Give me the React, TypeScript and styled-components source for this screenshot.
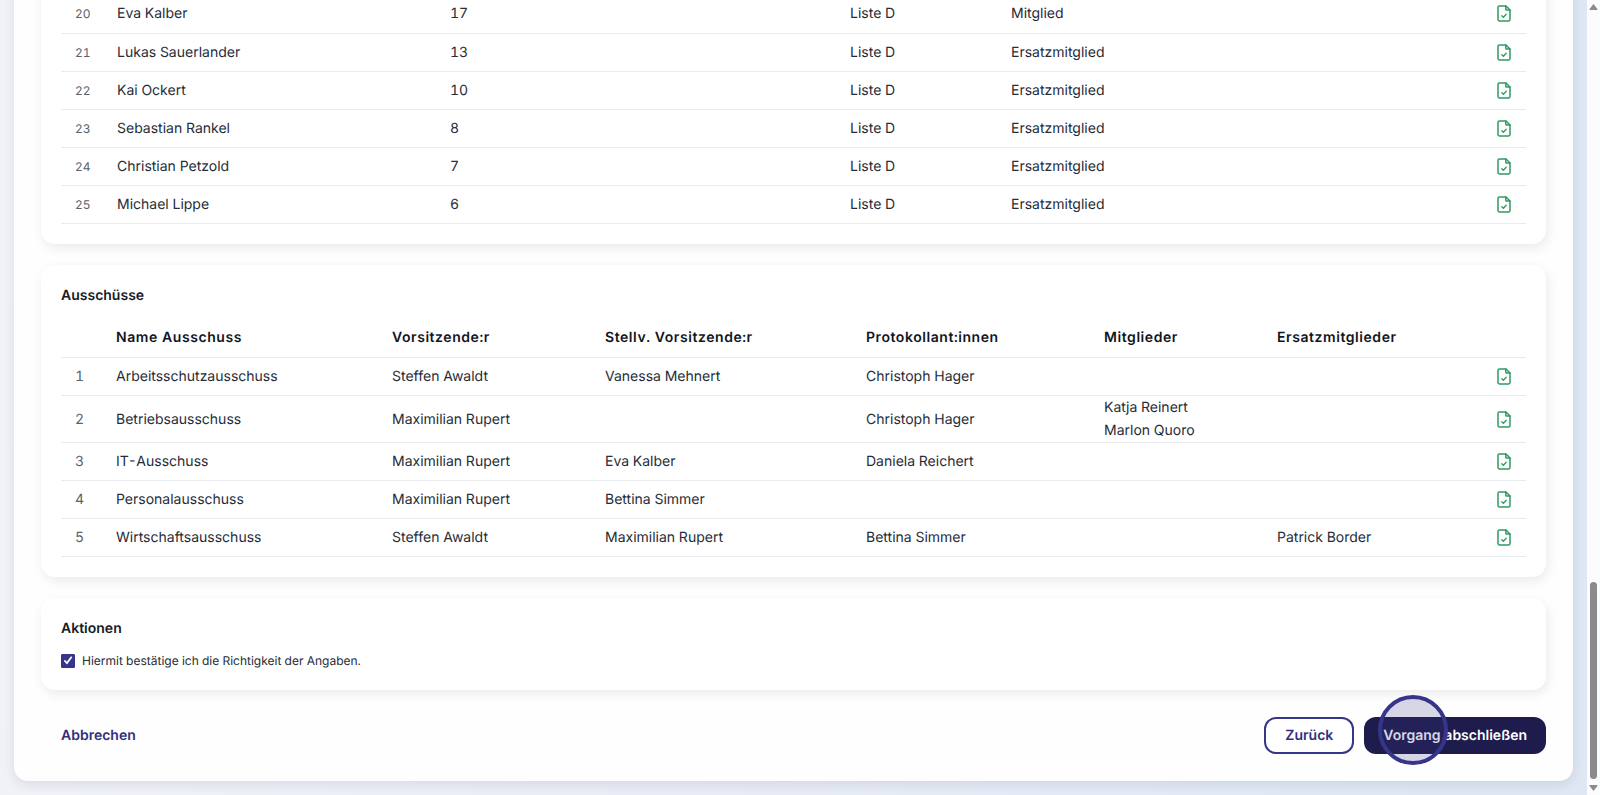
import React from "react";
import styled, { createGlobalStyle } from "styled-components";

const GlobalStyle = createGlobalStyle`
  *, *::before, *::after { box-sizing: border-box; }
  body {
    margin: 0;
    font-family: Inter, "Liberation Sans", sans-serif;
    font-size: 14px;
    line-height: 23px;
    font-variant-numeric: tabular-nums;
    text-rendering: geometricPrecision;
    color: #262c38;
  }
`;

const Window = styled.div`
  display: flex;
  height: 100vh;
  overflow: hidden;
`;

/* The view rests at its lower end, so rows above the fold run out of the top. */
const Viewport = styled.main`
  flex: 1;
  min-width: 0;
  display: flex;
  flex-direction: column;
  justify-content: flex-end;
  overflow: hidden;
  padding: 0 14px 14px;
  background: linear-gradient(100deg, #f1f3f7 0%, #e8ecf6 50%, #dfe7f4 90%);
`;

const Panel = styled.form`
  display: flex;
  flex-direction: column;
  gap: 21px;
  padding: 27px;
  border-radius: 14px;
  background: #fefefe;
  box-shadow: 0 3px 12px rgba(20, 30, 60, 0.1);
`;

const Card = styled.section`
  padding: 20px 20px 20px;
  border-radius: 14px;
  background: #ffffff;
  box-shadow: 2px 4px 12px rgba(0, 0, 0, 0.08);
`;

const Heading = styled.h2`
  margin: 0;
  font-size: 14px;
  font-weight: 600;
  line-height: 22px;
  color: #161b26;
`;

const Table = styled.table`
  width: 100%;
  table-layout: fixed;
  border-collapse: collapse;
`;

const Row = styled.tr`
  height: 38px;
  border-bottom: 1px solid #e9eaed;
`;

const HeadRow = styled(Row)`
  height: 51px;
`;

const HeadCell = styled.th`
  padding: 12px 0 0;
  text-align: left;
  font-weight: 600;
  letter-spacing: 0.04em;
  white-space: nowrap;
  color: #11151e;
`;

const Cell = styled.td`
  padding: 0;
`;

const NumberCell = styled(Cell)<{ $small?: boolean }>`
  padding-left: 14px;
  font-size: ${(p) => (p.$small ? 12 : 14)}px;
  color: #5c626c;
`;

const IconCell = styled(Cell)`
  padding-right: 15px;
`;

const DocIcon = styled.svg`
  display: block;
  margin-left: auto;
  fill: none;
  stroke: #2f9a62;
  stroke-width: 1.5;
  stroke-linecap: round;
  stroke-linejoin: round;
`;

const CheckLabel = styled.label`
  display: flex;
  align-items: center;
  gap: 7px;
  width: max-content;
  margin-top: 11px;
  font-size: 12px;
  line-height: 19px;
`;

const CheckBox = styled.input`
  appearance: none;
  flex: none;
  width: 14px;
  height: 14px;
  margin: 0;
  border: 1px solid #37358a;
  border-radius: 1px;
  background: #ffffff;
  display: grid;
  place-content: center;

  &:checked {
    background: #37358a;
  }

  &:checked::before {
    content: "";
    width: 10px;
    height: 10px;
    background: #ffffff;
    clip-path: polygon(8% 54%, 20% 42%, 38% 62%, 80% 8%, 94% 18%, 40% 90%);
  }
`;

const Footer = styled.footer`
  display: flex;
  align-items: center;
  gap: 10px;
  margin-top: 6px;
`;

const CancelLink = styled.a`
  margin: 0 auto 0 20px;
  font-weight: 600;
  color: #312f7c;
  text-decoration: none;
`;

const Button = styled.button<{ $primary?: boolean }>`
  position: relative;
  height: 37px;
  padding: 0 19px;
  border: ${(p) => (p.$primary ? "0" : "2px solid #37358a")};
  border-radius: 12px;
  background: ${(p) => (p.$primary ? "#1e1c4c" : "#ffffff")};
  color: ${(p) => (p.$primary ? "#ffffff" : "#312f7c")};
  font: inherit;
  font-weight: 600;
  text-rendering: inherit;
  white-space: nowrap;
`;

const ClickMarker = styled.span`
  position: absolute;
  top: -22px;
  right: 98px;
  width: 70px;
  height: 70px;
  border: 4px solid #37358a;
  border-radius: 50%;
  background: rgba(55, 53, 138, 0.2);
  pointer-events: none;
`;

const ScrollTrack = styled.div`
  flex: none;
  display: flex;
  flex-direction: column;
  align-items: center;
  justify-content: space-between;
  width: 13px;
  padding: 4px 0;
  background: #fcfcfc;
`;

const Thumb = styled.div`
  width: 7px;
  height: 25%;
  margin: auto 0 6px;
  border-radius: 4px;
  background: #8b8b8b;
`;

const Arrow = styled.svg`
  flex: none;
  fill: #8b8b8b;
`;

function VerifiedDoc() {
  return (
    <DocIcon width="14" height="17" viewBox="0 0 14 17" role="img" aria-label="Geprüft">
      <path d="M9 1H2.4A1.4 1.4 0 0 0 1 2.4v12.2A1.4 1.4 0 0 0 2.4 16h9.2a1.4 1.4 0 0 0 1.4-1.4V5z" />
      <path d="M8.8 1v3.2a.8.8 0 0 0 .8.8H13" />
      <path d="M4.8 10.8l1.6 1.5 2.8-3" strokeWidth="1.3" />
    </DocIcon>
  );
}

function Columns({ widths }: { widths: number[] }) {
  return (
    <colgroup>
      {widths.map((width, i) => (
        <col key={i} width={width} />
      ))}
    </colgroup>
  );
}

const candidates = [
  [20, "Eva Kalber", 17, "Liste D", "Mitglied"],
  [21, "Lukas Sauerlander", 13, "Liste D", "Ersatzmitglied"],
  [22, "Kai Ockert", 10, "Liste D", "Ersatzmitglied"],
  [23, "Sebastian Rankel", 8, "Liste D", "Ersatzmitglied"],
  [24, "Christian Petzold", 7, "Liste D", "Ersatzmitglied"],
  [25, "Michael Lippe", 6, "Liste D", "Ersatzmitglied"],
];

const committeeHeads = [
  "Name Ausschuss",
  "Vorsitzende:r",
  "Stellv. Vorsitzende:r",
  "Protokollant:innen",
  "Mitglieder",
  "Ersatzmitglieder",
];

const committees: string[][][] = [
  [["Arbeitsschutzausschuss"], ["Steffen Awaldt"], ["Vanessa Mehnert"], ["Christoph Hager"], [], []],
  [["Betriebsausschuss"], ["Maximilian Rupert"], [], ["Christoph Hager"], ["Katja Reinert", "Marlon Quoro"], []],
  [["IT-Ausschuss"], ["Maximilian Rupert"], ["Eva Kalber"], ["Daniela Reichert"], [], []],
  [["Personalausschuss"], ["Maximilian Rupert"], ["Bettina Simmer"], [], [], []],
  [["Wirtschaftsausschuss"], ["Steffen Awaldt"], ["Maximilian Rupert"], ["Bettina Simmer"], [], ["Patrick Border"]],
];

export default function App() {
  return (
    <Window>
      <GlobalStyle />
      <Viewport>
        <Panel onSubmit={(e) => e.preventDefault()}>
          <Card>
            <Table>
              <Columns widths={[56, 333, 400, 161, 415, 100]} />
              <tbody>
                {candidates.map(([nr, ...cells]) => (
                  <Row key={nr}>
                    <NumberCell $small>{nr}</NumberCell>
                    {cells.map((cell, i) => (
                      <Cell key={i}>{cell}</Cell>
                    ))}
                    <IconCell>
                      <VerifiedDoc />
                    </IconCell>
                  </Row>
                ))}
              </tbody>
            </Table>
          </Card>

          <Card>
            <Heading>Ausschüsse</Heading>
            <Table>
              <Columns widths={[55, 276, 213, 261, 238, 173, 149, 100]} />
              <thead>
                <HeadRow>
                  <HeadCell as="td" />
                  {committeeHeads.map((head) => (
                    <HeadCell key={head} scope="col">
                      {head}
                    </HeadCell>
                  ))}
                  <HeadCell as="td" />
                </HeadRow>
              </thead>
              <tbody>
                {committees.map((cells, nr) => (
                  <Row key={nr}>
                    <NumberCell>{nr + 1}</NumberCell>
                    {cells.map((names, i) => (
                      <Cell key={i}>
                        {names.map((name) => (
                          <div key={name}>{name}</div>
                        ))}
                      </Cell>
                    ))}
                    <IconCell>
                      <VerifiedDoc />
                    </IconCell>
                  </Row>
                ))}
              </tbody>
            </Table>
          </Card>

          <Card>
            <Heading>Aktionen</Heading>
            <CheckLabel>
              <CheckBox type="checkbox" defaultChecked />
              Hiermit bestätige ich die Richtigkeit der Angaben.
            </CheckLabel>
          </Card>

          <Footer>
            <CancelLink href="#">Abbrechen</CancelLink>
            <Button type="button">Zurück</Button>
            <Button type="submit" $primary>
              Vorgang abschließen
              <ClickMarker aria-hidden="true" />
            </Button>
          </Footer>
        </Panel>
      </Viewport>
      <ScrollTrack aria-hidden="true">
        <Arrow width="9" height="6" viewBox="0 0 9 6">
          <path d="M4.5 0L8.6 5.2Q8.6 6 8 6H1Q.4 6 .4 5.2z" />
        </Arrow>
        <Thumb />
        <Arrow width="9" height="6" viewBox="0 0 9 6">
          <path d="M4.5 6L8.6.8Q8.6 0 8 0H1Q.4 0 .4.8z" />
        </Arrow>
      </ScrollTrack>
    </Window>
  );
}
